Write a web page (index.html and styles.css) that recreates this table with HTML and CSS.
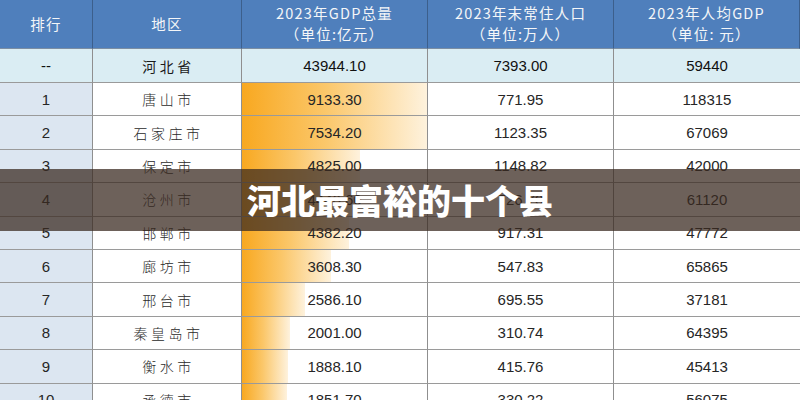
FILE: index.html
```html
<!DOCTYPE html>
<html lang="zh">
<head>
<meta charset="utf-8">
<link rel="stylesheet" href="styles.css">
</head>
<body>
<div class="page">
  <div class="table">
    <div class="th">排行</div>
    <div class="th">地区</div>
    <div class="th"><span>2023年GDP总量</span><span>（单位:亿元）</span></div>
    <div class="th"><span>2023年末常住人口</span><span>（单位:万人）</span></div>
    <div class="th"><span>2023年人均GDP</span><span>（单位: 元）</span></div>

    <div class="td total rank">--</div>
    <div class="td total name">河北省</div>
    <div class="td total num">43944.10</div>
    <div class="td total num">7393.00</div>
    <div class="td total num">59440</div>

    <div class="td rank">1</div><div class="td name">唐山市</div>
    <div class="td gdp"><i class="bar" style="width:185px"></i><span>9133.30</span></div>
    <div class="td num">771.95</div><div class="td num">118315</div>

    <div class="td rank">2</div><div class="td name">石家庄市</div>
    <div class="td gdp"><i class="bar" style="width:185px"></i><span>7534.20</span></div>
    <div class="td num">1123.35</div><div class="td num">67069</div>

    <div class="td rank">3</div><div class="td name">保定市</div>
    <div class="td gdp"><i class="bar" style="width:118px"></i><span>4825.00</span></div>
    <div class="td num">1148.82</div><div class="td num">42000</div>

    <div class="td rank">4</div><div class="td name">沧州市</div>
    <div class="td gdp"><i class="bar" style="width:110px"></i><span>4440.60</span></div>
    <div class="td num">726.70</div><div class="td num">61120</div>

    <div class="td rank">5</div><div class="td name">邯郸市</div>
    <div class="td gdp"><i class="bar" style="width:107px"></i><span>4382.20</span></div>
    <div class="td num">917.31</div><div class="td num">47772</div>

    <div class="td rank">6</div><div class="td name">廊坊市</div>
    <div class="td gdp"><i class="bar" style="width:89px"></i><span>3608.30</span></div>
    <div class="td num">547.83</div><div class="td num">65865</div>

    <div class="td rank">7</div><div class="td name">邢台市</div>
    <div class="td gdp"><i class="bar" style="width:63px"></i><span>2586.10</span></div>
    <div class="td num">695.55</div><div class="td num">37181</div>

    <div class="td rank">8</div><div class="td name">秦皇岛市</div>
    <div class="td gdp"><i class="bar" style="width:48px"></i><span>2001.00</span></div>
    <div class="td num">310.74</div><div class="td num">64395</div>

    <div class="td rank">9</div><div class="td name">衡水市</div>
    <div class="td gdp"><i class="bar" style="width:46px"></i><span>1888.10</span></div>
    <div class="td num">415.76</div><div class="td num">45413</div>

    <div class="td rank">10</div><div class="td name">承德市</div>
    <div class="td gdp"><i class="bar" style="width:45px"></i><span>1851.70</span></div>
    <div class="td num">330.22</div><div class="td num">56075</div>
  </div>
  <div class="banner"><h1>河北最富裕的十个县</h1></div>
</div>
</body>
</html>
```

FILE: styles.css
```css
html, body {
  margin: 0;
  padding: 0;
  width: 800px;
  height: 400px;
  overflow: hidden;
  background: #fff;
}

.page {
  position: relative;
  width: 800px;
  height: 400px;
  overflow: hidden;
  font-family: "Liberation Sans", "Noto Sans CJK SC", sans-serif;
}

.table {
  display: grid;
  grid-template-columns: 93px 149px 186px 186px 186px;
  grid-template-rows: 49px 34px repeat(10, 33.4px);
}

.th {
  background: #4f7fbc;
  color: #f4f6f8;
  font-family: "Noto Sans CJK SC", sans-serif;
  font-size: 14.5px;
  letter-spacing: 1.2px;
  line-height: 21px;
  display: flex;
  flex-direction: column;
  align-items: center;
  justify-content: center;
  border-right: 1px solid #3c5f8c;
  border-bottom: 1px solid #7c8ea3;
  box-sizing: border-box;
  padding-bottom: 2px;
}

.th:last-child { border-right: none; }

.td {
  box-sizing: border-box;
  border-right: 1px solid #8f8f8f;
  border-bottom: 1px solid #9a9a9a;
  display: flex;
  align-items: center;
  justify-content: center;
  color: #262626;
  font-size: 15px;
  background: #fff;
}

.td:nth-child(5n) { border-right: none; }

.rank {
  background: #dce6f1;
  font-family: "Liberation Sans", sans-serif;
}

.name {
  font-family: "Noto Sans CJK SC", sans-serif;
  font-size: 14px;
  letter-spacing: 3.5px;
  padding-left: 3px;
  color: #2a2a2a;
  font-weight: 300;
}

.num { font-family: "Liberation Sans", sans-serif; }

.total {
  background: #daedf3;
  color: #111;
}

.total.name { font-weight: 400; color: #1a1a1a; }

.gdp {
  display: grid;
  grid-template-columns: 100%;
  grid-template-rows: 100%;
  justify-content: stretch;
  align-content: stretch;
  align-items: stretch;
  justify-items: center;
  padding: 0;
}

.gdp > * { grid-area: 1 / 1; }

.bar {
  justify-self: start;
  height: 100%;
  background: linear-gradient(to right, #f8a820 0%, #fbc76a 45%, #fef2dd 100%);
}

.gdp span {
  align-self: center;
  position: relative;
}

.banner {
  position: absolute;
  left: 0;
  top: 169px;
  width: 800px;
  height: 62px;
  background: rgba(58, 42, 32, 0.74);
  display: flex;
  align-items: center;
  justify-content: center;
}

.banner h1 {
  margin: 0;
  color: #fff;
  font-family: "Noto Sans CJK SC", sans-serif;
  font-weight: 900;
  font-size: 34px;
  letter-spacing: 0;
  line-height: 1;
}
```
